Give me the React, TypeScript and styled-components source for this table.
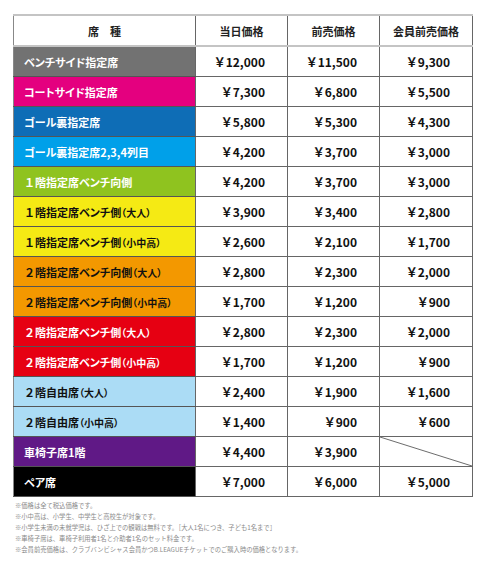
import styled, { createGlobalStyle } from "styled-components";

const Global = createGlobalStyle`
  body {
    margin: 0;
    background: #fff;
    font-family: "Noto Sans CJK JP", "Noto Sans", sans-serif;
  }
`;

const Page = styled.div`
  width: 482px;
  height: 568px;
  padding: 14px 0 0 13px;
  box-sizing: border-box;
`;

const Table = styled.table`
  border-collapse: collapse;
  table-layout: fixed;
  width: 457px;
  border-top: 2px solid #c4c4c4;
  border-left: 1px solid #888;
`;

const HeadCell = styled.th<{ $w: number }>`
  width: ${({ $w }) => $w}px;
  height: 29px;
  padding: 0;
  font-size: 11px;
  font-weight: 700;
  color: #222;
  text-align: center;
  border-right: 1px solid #666;
  border-bottom: 2px solid #c4c4c4;
  font-feature-settings: "palt";
`;

const NameCell = styled.td<{ $bg: string; $dark?: boolean }>`
  height: 29px;
  padding: 0 0 0 10px;
  background: ${({ $bg }) => $bg};
  color: ${({ $dark }) => ($dark ? "#111" : "#fff")};
  font-size: 11px;
  font-weight: 700;
  white-space: nowrap;
  border-right: 1px solid #666;
  border-bottom: 1px solid #555;
  font-feature-settings: "palt";
`;

/* full-width floor digit keeps its em box */
const Floor = styled.span`
  font-feature-settings: normal;
`;

const Small = styled.span`
  font-size: 10px;
`;

const PriceCell = styled.td`
  position: relative;
  height: 29px;
  padding: 0 22px 0 0;
  text-align: right;
  font-size: 12px;
  font-weight: 700;
  color: #111;
  border-right: 1px solid #666;
  border-bottom: 1px solid #666;
`;

const Slash = styled.svg`
  position: absolute;
  inset: 0;
  width: 100%;
  height: 100%;
`;

const Notes = styled.div`
  margin-top: 3px;
  padding-left: 2px;
  font-size: 6.3px;
  line-height: 11px;
  color: #8a8a8a;
  white-space: nowrap;
`;

type Row = { name: React.ReactNode; bg: string; dark?: boolean; p: (string | null)[] };

const rows: Row[] = [
  { name: "ベンチサイド指定席", bg: "#727272", p: ["12,000", "11,500", "9,300"] },
  { name: "コートサイド指定席", bg: "#e4007f", p: ["7,300", "6,800", "5,500"] },
  { name: "ゴール裏指定席", bg: "#0e6db6", p: ["5,800", "5,300", "4,300"] },
  { name: "ゴール裏指定席2,3,4列目", bg: "#00a0e9", p: ["4,200", "3,700", "3,000"] },
  { name: <><Floor>１</Floor>階指定席ベンチ向側</>, bg: "#8fc31f", p: ["4,200", "3,700", "3,000"] },
  { name: <><Floor>１</Floor>階指定席ベンチ側<Small>（大人）</Small></>, bg: "#f5ea14", dark: true, p: ["3,900", "3,400", "2,800"] },
  { name: <><Floor>１</Floor>階指定席ベンチ側<Small>（小中高）</Small></>, bg: "#f5ea14", dark: true, p: ["2,600", "2,100", "1,700"] },
  { name: <><Floor>２</Floor>階指定席ベンチ向側<Small>（大人）</Small></>, bg: "#f39800", dark: true, p: ["2,800", "2,300", "2,000"] },
  { name: <><Floor>２</Floor>階指定席ベンチ向側<Small>（小中高）</Small></>, bg: "#f39800", dark: true, p: ["1,700", "1,200", "900"] },
  { name: <><Floor>２</Floor>階指定席ベンチ側<Small>（大人）</Small></>, bg: "#e60012", p: ["2,800", "2,300", "2,000"] },
  { name: <><Floor>２</Floor>階指定席ベンチ側<Small>（小中高）</Small></>, bg: "#e60012", p: ["1,700", "1,200", "900"] },
  { name: <><Floor>２</Floor>階自由席<Small>（大人）</Small></>, bg: "#abdcf5", dark: true, p: ["2,400", "1,900", "1,600"] },
  { name: <><Floor>２</Floor>階自由席<Small>（小中高）</Small></>, bg: "#abdcf5", dark: true, p: ["1,400", "900", "600"] },
  { name: "車椅子席1階", bg: "#601986", p: ["4,400", "3,900", null] },
  { name: "ペア席", bg: "#000", p: ["7,000", "6,000", "5,000"] },
];

export default function App() {
  return (
    <Page>
      <Global />
      <Table>
        <thead>
          <tr>
            <HeadCell $w={181}>席　種</HeadCell>
            <HeadCell $w={91}>当日価格</HeadCell>
            <HeadCell $w={91}>前売価格</HeadCell>
            <HeadCell $w={92}>会員前売価格</HeadCell>
          </tr>
        </thead>
        <tbody>
          {rows.map((r, i) => (
            <tr key={i}>
              <NameCell $bg={r.bg} $dark={r.dark}>{r.name}</NameCell>
              {r.p.map((v, j) => (
                <PriceCell key={j}>
                  {v ? (
                    `￥${v}`
                  ) : (
                    <Slash viewBox="0 0 92 30" preserveAspectRatio="none">
                      <line x1="0" y1="0" x2="92" y2="30" stroke="#444" strokeWidth="0.8" />
                    </Slash>
                  )}
                </PriceCell>
              ))}
            </tr>
          ))}
        </tbody>
      </Table>
      <Notes>
        ※価格は全て税込価格です。
        <br />
        ※小中高は、小学生、中学生と高校生が対象です。
        <br />
        ※小学生未満の未就学児は、ひざ上での観戦は無料です。［大人1名につき、子ども1名まで］
        <br />
        ※車椅子席は、車椅子利用者1名と介助者1名のセット料金です。
        <br />
        ※会員前売価格は、クラブバンビシャス会員かつB.LEAGUEチケットでのご購入時の価格となります。
      </Notes>
    </Page>
  );
}
